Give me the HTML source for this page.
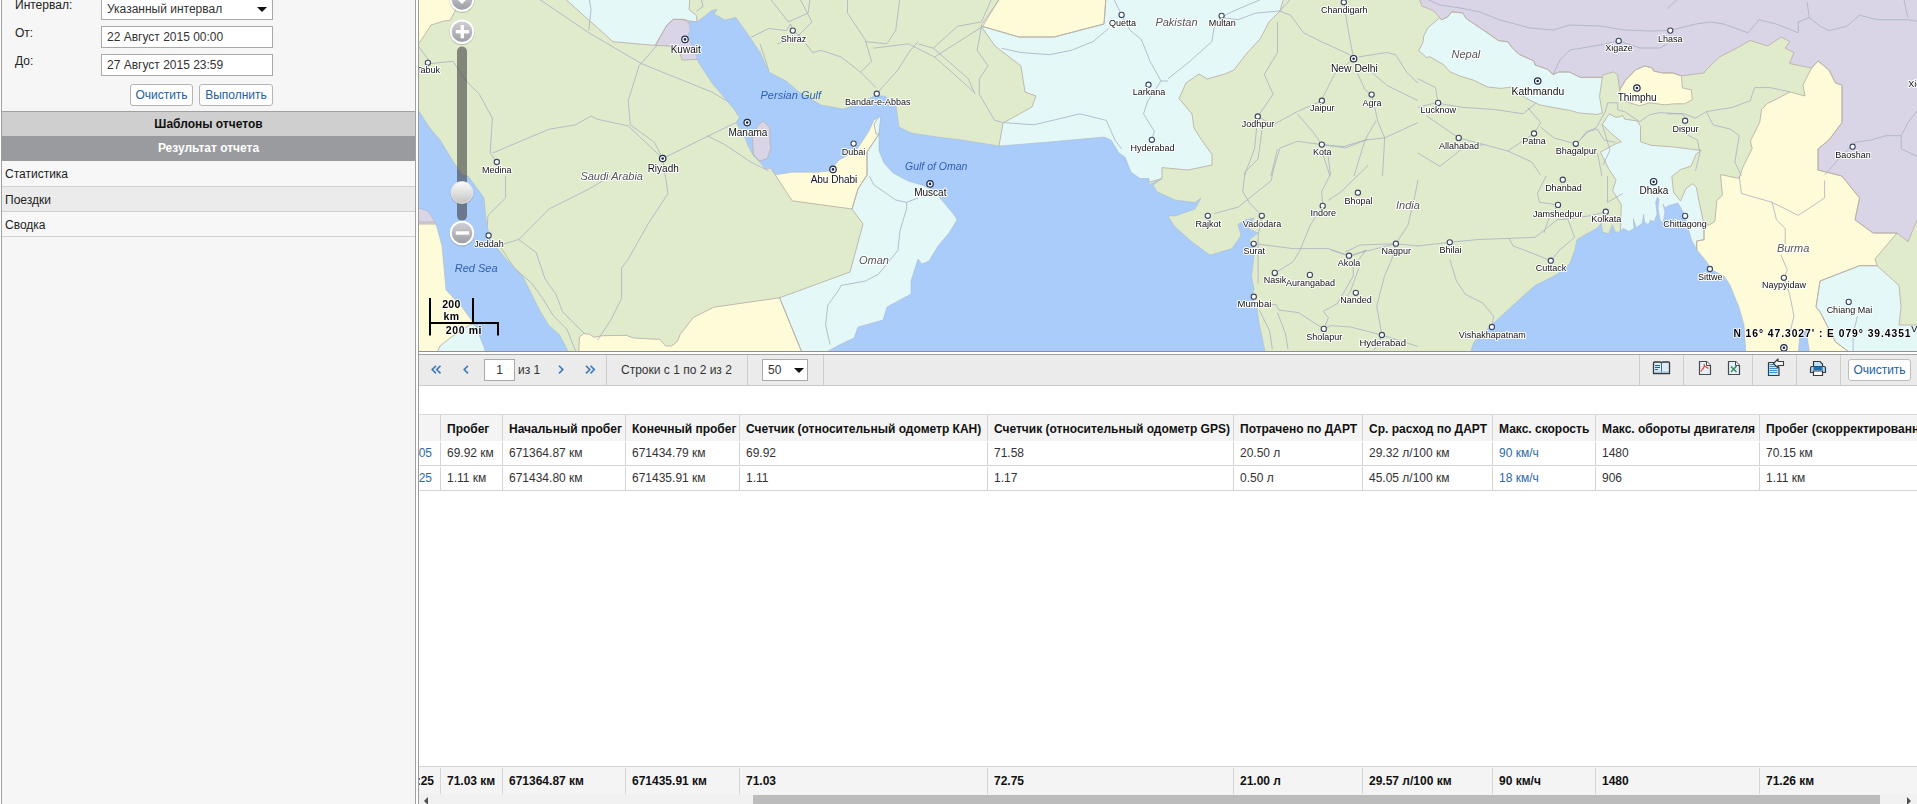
<!DOCTYPE html>
<html><head><meta charset="utf-8">
<style>
*{box-sizing:border-box;margin:0;padding:0}
html,body{width:1917px;height:804px;overflow:hidden;background:#fff;font-family:"Liberation Sans",sans-serif;font-size:12px;color:#222}
.abs{position:absolute}
#left{position:absolute;left:1px;top:0;width:415px;height:804px;background:#f6f6f6;border-left:1px solid #a0a0a6;border-right:1px solid #a0a0a6}
.lbl{position:absolute;left:13px;font-size:12px;color:#222}
.inp{position:absolute;left:101px;width:172px;height:22px;background:#fff;border:1px solid #a9a9a9;font-size:12px;color:#333;padding-left:5px;line-height:20px}
.btn{position:absolute;top:84px;height:22px;background:#fff;border:1px solid #b5b5b5;border-radius:3px;color:#24609c;font-size:12px;line-height:20px;text-align:center}
.hdr{position:absolute;left:0;width:413px;height:25px;text-align:center;font-weight:bold;font-size:12px;line-height:25px}
.item{position:absolute;left:0;width:413px;height:25px;border-bottom:1px solid #d0cfd2;padding-left:3px;line-height:26px;font-size:12px;color:#222}
#mapwrap{position:absolute;left:418px;top:0;width:1499px;height:352px;border-left:1px solid #9c9c9c;border-bottom:1px solid #8f8f8f;overflow:hidden}
#grid{position:absolute;left:418px;top:352px;width:1499px;height:452px;border-left:1px solid #9c9c9c;background:#fff}
#tb{position:absolute;left:0;top:2px;width:1499px;height:32px;background:#ebebeb;border-top:2px solid #a4a4a4;border-bottom:1px solid #cfcfcf}
.sep{position:absolute;top:0;width:1px;height:29px;background:#cfcfcf}
.tbt{position:absolute;top:8px;font-size:12px;color:#333}
table{border-collapse:separate;border-spacing:0}
.row{position:absolute;left:0;height:25px;width:1499px}
.c{position:absolute;top:0;height:25px;line-height:24px;padding-left:6px;white-space:nowrap;overflow:hidden;font-size:12px;color:#333}
.cl{position:absolute;line-height:24px;white-space:nowrap;overflow:hidden;font-size:12px}
.vl{position:absolute;width:1px;background:#d4d4d4}
.tt{font-size:12px;color:#333}
</style></head><body>
<div id="left">
  <div class="lbl" style="top:-2px">Интервал:</div>
  <div class="inp" style="top:-4px;height:24px;line-height:25px;left:99px;width:172px">Указанный интервал<span style="position:absolute;right:5px;top:10px;width:0;height:0;border-left:5px solid transparent;border-right:5px solid transparent;border-top:5px solid #111"></span></div>
  <div class="lbl" style="top:26px">От:</div>
  <div class="inp" style="top:26px;left:99px;width:172px">22 Август 2015 00:00</div>
  <div class="lbl" style="top:54px">До:</div>
  <div class="inp" style="top:54px;left:99px;width:172px">27 Август 2015 23:59</div>
  <div class="btn" style="left:128px;width:63px">Очистить</div>
  <div class="btn" style="left:197px;width:74px">Выполнить</div>
  <div class="hdr" style="top:111px;border-top:1px solid #a0a0a0;background:#d0cfd0;color:#111;height:25px;line-height:25px">Шаблоны отчетов</div>
  <div class="hdr" style="top:136px;background:#9a9b9e;color:#fff">Результат отчета</div>
  <div class="item" style="top:161px;height:26px;line-height:27px;background:#f7f7f7">Статистика</div>
  <div class="item" style="top:187px;background:#ebebeb">Поездки</div>
  <div class="item" style="top:212px;background:#f7f7f7">Сводка</div>
</div>
<div id="mapwrap"><svg class="abs" style="left:0;top:0;will-change:transform" width="1498" height="351" viewBox="419 0 1498 351">
<defs><linearGradient id="gb" x1="0" y1="0" x2="0" y2="1"><stop offset="0" stop-color="#d2d2d6"/><stop offset="1" stop-color="#9b9ca3"/></linearGradient><linearGradient id="gh" x1="0" y1="0" x2="0" y2="1"><stop offset="0" stop-color="#fbfbfb"/><stop offset="1" stop-color="#c4c4c4"/></linearGradient></defs>
<rect x="418" y="0" width="1499" height="351" fill="#e0ebcc"/>
<polygon fill="#fefbd8" points="415,-3 462,-3 455,11 450,20.5 444,21 431,25 420,42 415,44"/>
<polygon fill="#fefbd8" points="415,222 470,222 470,300 500,355 415,355"/>
<polygon fill="#d9d5e6" points="415,207 428,210 437,224 415,224"/>
<polygon fill="#e4f8f8" points="471,324 462,330 450,338 440,346 436,355 500,355 490,330"/>
<polygon fill="#e4f8f8" points="563,-3 613,41.7 655,45.4 667,25 673.5,19.3 684,19.3 689,21 697,22 696.5,15.6 689,9.4 690,-3"/>
<polygon fill="#d9d5e6" points="655.8,45.4 667,25 673.5,19.3 684,19.8 689,23 700,30 705,58 697.5,59.5 682,60 678.8,50 668,45.9"/>
<polygon fill="#fefbd8" points="578.7,355 579.4,337.2 583.8,333.5 589.7,334.3 594,337.2 602.8,335.7 626,335.3 633.5,338 659.8,339.4 665.6,346 671.5,346 677.3,341.6 680.2,334.3 693.4,317.5 713.8,307.2 779.6,297.8 803,355"/>
<polygon fill="#fefbd8" points="765,160 835,155 868,118 882,112 879,134 867,152 867,175 858,189 852,209 792.2,200.8 771,168.5"/>
<polygon fill="#e4f8f8" points="867,152 879,134 900,140 975,215 960,355 803,355 779.6,297.8 850,272 863,224 852,209 858,189 867,175"/>
<polygon fill="#e4f8f8" points="874,124 882,112 880,134 876,134"/>
<polygon fill="#fefbd8" points="1001,-3 1106,-3 1104,24 1054,37 1019,37 981,26"/>
<polygon fill="#e4f8f8" points="1106,-3 1284,-3 1280,11 1269,22 1260,39 1247,53 1234,70 1225,74 1207,79 1199,74 1186,83 1179,98.5 1192,114 1194,128 1201,139 1212,154.5 1212,165 1188,170 1162,167.6 1162,178.5 1150,182 999,162 999,146 1003,123 1032,107 1036,96 1025,92 1021,66 995,46 981,26 1019,37 1054,37 1104,24"/>
<polygon fill="#d9d5e6" points="1418.8,-3 1920,-3 1920,213 1908,241.7 1897,233 1873,233 1855,219.8 1859.6,198 1842,176 1818,170 1818,149 1829,140 1842,122.6 1842,85 1835.6,83 1829,70 1818,61 1811.5,68 1789.6,63.5 1794,52.5 1785,48 1790,41.6 1781,37 1768,46 1750,40.5 1737,48 1719.5,57 1706,70 1704.3,72.9 1681.4,75.9 1672.4,72.9 1662.5,72.9 1653.5,71 1652.5,68 1644.6,66 1635.6,69.9 1625.7,79.9 1619.7,89.9 1617.7,74.9 1613.7,71.9 1602.8,74.9 1602.3,77.4 1580.4,77.4 1569.4,72 1558.5,72 1553,74.7 1547.5,69.2 1535.2,65.1 1533.9,61 1518.8,54.2 1512,47.4 1507.9,41.9 1498.3,40.5 1484.6,30.9 1468.2,20 1466.6,18.9 1462.6,12.9 1451.6,11.9 1447.7,16.9 1441.7,19.9 1433.7,10.9 1421.8,6"/>
<polygon fill="#e4f8f8" points="1439.7,17.9 1441.7,19.9 1447.7,16.9 1451.6,11.9 1462.6,12.9 1466.6,18.9 1468.2,20 1484.6,30.9 1498.3,40.5 1507.9,41.9 1512,47.4 1518.8,54.2 1533.9,61 1535.2,65.1 1547.5,69.2 1553,74.7 1558.5,72 1569.4,72 1580.4,77.4 1602.3,77.4 1599.5,96.6 1602.3,113 1596.8,114.4 1579,113 1569.4,110.3 1553,107.5 1539.3,104.8 1525.7,98 1512,87 1501,88.4 1487.4,87 1473.7,80.2 1460,76.1 1449.7,71.6 1443.7,64.7 1429.8,56.7 1426.8,57.7 1418.8,50.7 1422.8,42.8 1423.8,35.8 1427.8,27.9"/>
<polygon fill="#fefbd8" points="1619.7,89.9 1625.7,79.9 1635.6,69.9 1644.6,66 1652.5,68 1653.5,71 1662.5,72.9 1672.4,72.9 1681.4,75.9 1682.4,87.9 1691.3,89.9 1692.3,99.8 1684.4,103.8 1674.4,103.8 1664.5,104.8 1649.6,102.8 1639.6,105.8 1629.7,102.8 1621.7,99.8"/>
<polygon fill="#e4f8f8" points="1602.2,124.4 1609.2,113.9 1616.1,117.4 1623,115.7 1624.8,119.2 1637,120.9 1640.5,126.1 1640.5,141.8 1651,145.3 1673.6,147 1701.4,150.5 1696.2,154 1691,166.2 1680.5,169.6 1671.8,176.6 1673.6,192.3 1680.5,201 1685.8,188.8 1692.7,183.6 1696.2,187 1699.7,204.5 1704,224.8 1704,239.7 1696.7,241 1696.7,260 1619.6,260 1621.3,204.5 1612.6,190.5 1616.1,180.1 1609.2,169.6 1600.4,152.2 1616.1,143.5 1621.3,141.8 1610.9,133.1"/>
<polygon fill="#fefbd8" points="1803,85 1811.5,68 1818,61 1829,70 1835.6,83 1842,85 1842,122.6 1829,140 1818,149 1818,170 1842,176 1859.6,198 1855,219.8 1873,233 1897,233 1875,259 1877,265.7 1859.6,265.7 1820,281 1816,307 1820,311.7 1835.6,342 1853,355 1740,355 1690,262 1696.7,250 1696.7,241 1704,239.7 1704,224.8 1709.3,225 1714.9,221.3 1716.8,200.7 1722.4,195.1 1720.5,174.6 1739.2,178.4 1742.9,167.2 1752.2,148.5 1750.4,141 1759.7,122.4 1761.6,109.3 1767,103.7 1774.6,100 1790,92 1805,96"/>
<polygon fill="#e4f8f8" points="1820,281 1859.6,265.7 1877,265.7 1899,285.5 1901,307 1899,325 1920,325 1920,355 1853,355 1835.6,342 1820,311.7 1816,307"/>
<g fill="none" stroke="#a8b0c4" stroke-width="0.8" stroke-linejoin="round">
<polyline points="1168,78.8 1189.9,61.3 1211.8,41.6 1214,28.5 1220.5,17.5 1233.7,11 1266.5,-3"/>
<polyline points="1220.5,17.5 1238,19.7 1255.6,13.1 1279.6,11"/>
<polyline points="992.4,-3 981.5,21.9 957.4,26.3 933.3,48.2 918,43.8"/>
<polyline points="981.5,26.3 977.1,50.4 988,65.7 979.3,78.8 979.3,94.1 994.6,120.4 1003.4,122.6"/>
<polyline points="933.3,48.2 968.4,78.8 974.9,94.1"/>
<polyline points="1001.2,48.2 1020.9,52.5 1049.3,54.7 1071.2,50.4 1093.1,41.6 1108.5,28.5"/>
<polyline points="1112.8,-3 1121.6,14.9 1130.4,30.6 1141.3,39.4 1150,61.3 1161,81 1168,81"/>
<polyline points="1003.4,122.6 1034,124.8 1080,113.8 1106.3,120.4 1115,140.1 1121.6,148.9"/>
<polyline points="1161,81 1147.9,100.7 1143.5,113.8 1154.4,131.3 1151.8,139.7"/>
<polyline points="1292.8,-3 1279.6,11"/>
<polyline points="1279.6,11 1290.6,15.3 1303.7,32.8 1321.2,41.6 1349.7,54.7 1353.6,58.7"/>
<polyline points="1277.5,21.9 1277.5,52.5 1264.3,74.4 1273.1,94.1 1257.8,116.5 1254.5,148.9 1244.6,175.1"/>
<polyline points="1353.6,58.7 1334.4,74.4 1323.4,96.3 1321.9,100.7 1297.2,111.6 1273.1,124.8 1257.8,116.5"/>
<polyline points="1297.2,113.8 1312.5,131.3 1321.9,144.5 1343.1,146.7 1365,140.1 1384.7,137.9 1418,122.6"/>
<polyline points="1343.1,-3 1347.5,26.3 1353.6,58.7"/>
<polyline points="1358.5,56.9 1386.9,52.5 1395.7,54.7 1406.6,72.2 1418,83.2"/>
<polyline points="1354,65.7 1365,89.8 1371.6,94.6 1378.2,122.6 1384.7,137.9 1382.5,176"/>
<polyline points="1371.6,72.2 1386.9,85.4 1418,100.7"/>
<polyline points="1376,120.4 1365,140.1 1354,176"/>
<polyline points="1321.2,148.9 1330,176"/>
<polyline points="1277.5,148.9 1270.9,176"/>
<polyline points="1418,78.8 1435.5,87.6 1438.1,102.9"/>
<polyline points="1418,107.3 1435.5,102.9 1461.8,107.3 1494.6,109.5 1523.1,113.8 1536.2,102.9"/>
<polyline points="1426.8,116 1458.7,137.9 1483.7,144.5 1507.8,151 1534,133.5 1540.6,122.6 1527.5,107.3"/>
<polyline points="1507.8,151 1531.8,162 1540.6,175.1"/>
<polyline points="1540.6,127 1553.7,137.9 1575.8,143.8 1588.8,131.3 1597.5,129.2 1604.1,140.1 1615,142.3"/>
<polyline points="1597.5,153.2 1601.9,176"/>
<polyline points="1418,153.2 1439.9,166.4 1461.8,148.9 1483.7,144.5"/>
<polyline points="1417,246 1449.8,242.3 1478.3,239.5 1508.9,238.4 1535.2,237.3 1557.1,219.8 1570.2,218.7 1592.1,215.4 1605.7,211.7"/>
<polyline points="1508.9,238.4 1513.3,246 1530.8,252.6 1550.8,260.7 1559.3,250.4 1574.6,237.3 1568,219.8"/>
<polyline points="1449.8,259.2 1456.4,281.1 1465.2,294.2 1482.7,303 1493.6,316.1 1491.9,327"/>
<polyline points="1546.2,176 1537.4,193.5 1539.6,202.3 1558,204.9 1548.3,219.8 1544,232.9"/>
<polyline points="1607.5,176 1607.5,202.3 1622.8,193.5"/>
<polyline points="1262.5,126 1258.1,158.8 1245,172 1242.8,191.7 1249.3,202.6 1261.8,215.8 1258.1,235.5 1258.1,257.3 1258.1,283.6"/>
<polyline points="1280,147.9 1297.5,141.3 1321.6,144.6 1345.7,147.9 1368,139.1"/>
<polyline points="1280,147.9 1273.4,169.8 1271.2,180.7 1249.3,198.2 1238.4,207 1214.3,213.6"/>
<polyline points="1328.2,156.6 1330.4,174.2 1321.6,191.7 1322.7,205.9 1310.6,224.5 1299.7,250.8 1293.1,261.7 1275.6,272.7"/>
<polyline points="1368,165.4 1341.3,191.7 1328.2,200.4"/>
<polyline points="1258.1,244.2 1293.1,248.6 1328.2,248.6 1349,255.6 1368,250.8 1395.9,243.7 1418,246"/>
<polyline points="1358.8,268.3 1350,292.4 1341.3,302"/>
<polyline points="1256.7,302.2 1276.2,304.8 1278.8,310 1298.4,312.6 1323.8,328.9 1331,325.6 1350.6,327 1381.9,335 1418,346.5"/>
<polyline points="1259.3,310 1269.7,330.9 1272.3,349.1"/>
<polyline points="1277.5,312.6 1285.4,333.5 1288,349.1"/>
<polyline points="1323.8,328.9 1328.4,317.8 1323.2,311.3 1337.5,303.5 1342.8,294.3 1353.2,276.1 1353.2,267 1366.2,250"/>
<polyline points="1381.9,335 1376.7,306.1 1384.5,276.1 1392.3,257.8 1395.9,243.7 1408,225 1414,200 1418,180"/>
<polyline points="1381.9,336 1374,350.4"/>
<polyline points="1331,250 1350.6,256.5 1366.2,250"/>
<polyline points="1395.9,243.7 1360,245 1345,252"/>
<polyline points="700.8,-3 703,6.6 696.5,11"/>
<polyline points="768.7,-3 788.4,21.9 808.1,13.1 810.3,-3"/>
<polyline points="751.2,37.2 768.7,28.5 786.2,30.6 790.6,24.1 792.8,30.6"/>
<polyline points="760,43.8 768.7,70"/>
<polyline points="790.6,30.6 799.3,35 812.5,52.5 821.2,50.4 841,56.9 860.6,72.2 876,87.6"/>
<polyline points="847.5,-3 847.5,13.1 865,39.4 871.6,61.3 860.6,72.2"/>
<polyline points="865,41.6 886.9,43.8 895.7,30.6 900,-3"/>
<polyline points="918,41.6 908.8,52.5 897.9,70 878.2,92"/>
<polyline points="536.2,-3 588.8,32.8 641.3,63.5 668,74.4 711.8,92 733.7,105"/>
<polyline points="588.8,-3 591,8.8 588.8,30.6"/>
<polyline points="656.6,46 639.1,65.7 628.2,100.7 630.3,124.8 654.4,142.3 662.7,158.5"/>
<polyline points="492.4,153.2 523.1,140.1 549.3,129.2 575.6,124.8 591,116 597.5,119.3 628.2,125.9 662.7,158.5"/>
<polyline points="415,41.6 431.1,63.5 453,61.3 466.2,81 479.3,94.1 492.4,118.2 490.2,153.2 496.8,162"/>
<polyline points="662.7,158.5 700,140 735,123 747.2,122.6"/>
<polyline points="505.6,176 505.6,197.9 488,215.4 485.9,239.5"/>
<polyline points="610.6,176 588.8,189.1 549.3,208.8 518.7,239.5 496.8,246"/>
<polyline points="518.7,239.5 536.2,252.6 545,278.9 555.9,294.2 562.5,311.7 571.2,320.5 584.4,333.6"/>
<polyline points="668,193.5 647.9,224.2 628.2,259.2 621.6,268 621.6,298.6 610.6,320.5 597.5,340.2"/>
<polyline points="501.2,248.2 514.3,268 531.8,283.3 542.8,298.6 553.7,316.1 566.9,329.2 575.6,351"/>
<polyline points="662.7,158.5 668,193.5"/>
<polyline points="707,135.7 724.5,144.5 750.8,162 768.3,170.7"/>
<polyline points="799,-3 812,22 794.5,39.4 777,43.8"/>
<polyline points="873.3,48.2 908.4,43.8 934.6,57 974,92"/>
<polyline points="934.6,57 982.8,26.3 1000.3,-3"/>
<polyline points="869.4,176 873.8,184.8 895.7,200 906.6,202.3 906.6,208.8 900,230.7 897.9,250.4 878.2,274.5 865,281.1 841,285.5 838.8,289.8 827.8,305.2 825.6,324.9 830,344.6"/>
<polyline points="906.6,202.3 918,198"/>
<polyline points="1667,8.8 1680,-3"/>
<polyline points="1667,30.6 1678,28.5 1695.5,24.1 1710.8,21.9 1724,24.1 1748,32.8 1759,19.7 1776.5,24.1 1798.3,32.8 1798.3,21.9 1809.3,17.5 1807.1,2.2"/>
<polyline points="1809.3,17.5 1820.2,26.3 1829,30.6 1846.5,26.3 1859.6,15.3 1877.2,19.7 1907.8,19.7 1920,21.9"/>
<polyline points="1903.4,-3 1907.8,17.5"/>
<polyline points="1920,107.3 1907.8,122.6 1901.2,135.7 1885.9,135.7 1870.6,140.1 1855.3,142.3 1840,157.6 1824.6,175.1"/>
<polyline points="1901.2,135.7 1901.2,148.9 1920,157.6"/>
<polyline points="1422,-3 1440,5 1460,8 1480,12 1500,20 1530,28 1553,30 1570,25 1600,26 1625,30 1650,31 1667,30.6"/>
<polyline points="1553,74.7 1560,60 1570,50 1600,45 1618.7,40.9 1640,48 1660,48 1667,44"/>
<polyline points="1607.8,102.8 1617.7,102.8 1617.7,109.8 1624.7,111.7 1639.6,121.7 1649.6,114.7 1659.5,112.7 1681.4,113.7 1685.4,116.7"/>
<polyline points="1607.8,102.8 1605,112 1596,128 1586,132 1580,140"/>
<polyline points="1667,113.8 1684.5,113.8 1695.5,118.2 1706.4,111.6 1732.7,107.3 1750.2,100.7 1754.6,87.6 1769.9,87.6 1780.8,89.8 1789.6,91.9"/>
<polyline points="1706.4,111.6 1713,124.8 1730.5,129.2 1739.2,135.7 1737,148.9 1734.9,162 1741.4,176"/>
<polyline points="1684.5,133.5 1697.6,140.1 1699.8,153.2 1695.5,170.8"/>
<polyline points="1602,124 1610,150 1603,165"/>
<polyline points="1739.2,176 1741.4,193.5 1772.1,202.3 1776.5,219.8 1785.2,228.5 1785.2,243.9"/>
<polyline points="1772.1,202.3 1798.3,215.4 1824.6,197.9 1824.6,180.4"/>
<polyline points="1780.8,254.8 1787.4,270.1 1783.9,277.8 1789.6,294.2 1794,316.1 1789.6,333.6"/>
<polyline points="1857.5,316.1 1853.1,333.6 1853.1,355"/>
</g>
<g fill="none" stroke="#bbb2aa" stroke-width="0.9" stroke-linejoin="round">
<polygon points="415,-3 462,-3 455,11 450,20.5 444,21 431,25 420,42 415,44"/>
<polygon points="415,222 470,222 470,300 500,355 415,355"/>
<polygon points="415,207 428,210 437,224 415,224"/>
<polygon points="471,324 462,330 450,338 440,346 436,355 500,355 490,330"/>
<polygon points="563,-3 613,41.7 655,45.4 667,25 673.5,19.3 684,19.3 689,21 697,22 696.5,15.6 689,9.4 690,-3"/>
<polygon points="655.8,45.4 667,25 673.5,19.3 684,19.8 689,23 700,30 705,58 697.5,59.5 682,60 678.8,50 668,45.9"/>
<polygon points="578.7,355 579.4,337.2 583.8,333.5 589.7,334.3 594,337.2 602.8,335.7 626,335.3 633.5,338 659.8,339.4 665.6,346 671.5,346 677.3,341.6 680.2,334.3 693.4,317.5 713.8,307.2 779.6,297.8 803,355"/>
<polygon points="765,160 835,155 868,118 882,112 879,134 867,152 867,175 858,189 852,209 792.2,200.8 771,168.5"/>
<polygon points="867,152 879,134 900,140 975,215 960,355 803,355 779.6,297.8 850,272 863,224 852,209 858,189 867,175"/>
<polygon points="874,124 882,112 880,134 876,134"/>
<polygon points="1001,-3 1106,-3 1104,24 1054,37 1019,37 981,26"/>
<polygon points="1106,-3 1284,-3 1280,11 1269,22 1260,39 1247,53 1234,70 1225,74 1207,79 1199,74 1186,83 1179,98.5 1192,114 1194,128 1201,139 1212,154.5 1212,165 1188,170 1162,167.6 1162,178.5 1150,182 999,162 999,146 1003,123 1032,107 1036,96 1025,92 1021,66 995,46 981,26 1019,37 1054,37 1104,24"/>
<polygon points="1418.8,-3 1920,-3 1920,213 1908,241.7 1897,233 1873,233 1855,219.8 1859.6,198 1842,176 1818,170 1818,149 1829,140 1842,122.6 1842,85 1835.6,83 1829,70 1818,61 1811.5,68 1789.6,63.5 1794,52.5 1785,48 1790,41.6 1781,37 1768,46 1750,40.5 1737,48 1719.5,57 1706,70 1704.3,72.9 1681.4,75.9 1672.4,72.9 1662.5,72.9 1653.5,71 1652.5,68 1644.6,66 1635.6,69.9 1625.7,79.9 1619.7,89.9 1617.7,74.9 1613.7,71.9 1602.8,74.9 1602.3,77.4 1580.4,77.4 1569.4,72 1558.5,72 1553,74.7 1547.5,69.2 1535.2,65.1 1533.9,61 1518.8,54.2 1512,47.4 1507.9,41.9 1498.3,40.5 1484.6,30.9 1468.2,20 1466.6,18.9 1462.6,12.9 1451.6,11.9 1447.7,16.9 1441.7,19.9 1433.7,10.9 1421.8,6"/>
<polygon points="1439.7,17.9 1441.7,19.9 1447.7,16.9 1451.6,11.9 1462.6,12.9 1466.6,18.9 1468.2,20 1484.6,30.9 1498.3,40.5 1507.9,41.9 1512,47.4 1518.8,54.2 1533.9,61 1535.2,65.1 1547.5,69.2 1553,74.7 1558.5,72 1569.4,72 1580.4,77.4 1602.3,77.4 1599.5,96.6 1602.3,113 1596.8,114.4 1579,113 1569.4,110.3 1553,107.5 1539.3,104.8 1525.7,98 1512,87 1501,88.4 1487.4,87 1473.7,80.2 1460,76.1 1449.7,71.6 1443.7,64.7 1429.8,56.7 1426.8,57.7 1418.8,50.7 1422.8,42.8 1423.8,35.8 1427.8,27.9"/>
<polygon points="1619.7,89.9 1625.7,79.9 1635.6,69.9 1644.6,66 1652.5,68 1653.5,71 1662.5,72.9 1672.4,72.9 1681.4,75.9 1682.4,87.9 1691.3,89.9 1692.3,99.8 1684.4,103.8 1674.4,103.8 1664.5,104.8 1649.6,102.8 1639.6,105.8 1629.7,102.8 1621.7,99.8"/>
<polygon points="1602.2,124.4 1609.2,113.9 1616.1,117.4 1623,115.7 1624.8,119.2 1637,120.9 1640.5,126.1 1640.5,141.8 1651,145.3 1673.6,147 1701.4,150.5 1696.2,154 1691,166.2 1680.5,169.6 1671.8,176.6 1673.6,192.3 1680.5,201 1685.8,188.8 1692.7,183.6 1696.2,187 1699.7,204.5 1704,224.8 1704,239.7 1696.7,241 1696.7,260 1619.6,260 1621.3,204.5 1612.6,190.5 1616.1,180.1 1609.2,169.6 1600.4,152.2 1616.1,143.5 1621.3,141.8 1610.9,133.1"/>
<polygon points="1803,85 1811.5,68 1818,61 1829,70 1835.6,83 1842,85 1842,122.6 1829,140 1818,149 1818,170 1842,176 1859.6,198 1855,219.8 1873,233 1897,233 1875,259 1877,265.7 1859.6,265.7 1820,281 1816,307 1820,311.7 1835.6,342 1853,355 1740,355 1690,262 1696.7,250 1696.7,241 1704,239.7 1704,224.8 1709.3,225 1714.9,221.3 1716.8,200.7 1722.4,195.1 1720.5,174.6 1739.2,178.4 1742.9,167.2 1752.2,148.5 1750.4,141 1759.7,122.4 1761.6,109.3 1767,103.7 1774.6,100 1790,92 1805,96"/>
<polygon points="1820,281 1859.6,265.7 1877,265.7 1899,285.5 1901,307 1899,325 1920,325 1920,355 1853,355 1835.6,342 1820,311.7 1816,307"/>
</g>
<polygon fill="#aaccfa" stroke="#a6b4c4" stroke-width="0.5" points="415,105 429,127 440,140 451,158 462,175 468,176 484,198 486,220 490,239 506,259 523,277 540,311 548.8,325.5 559,334.3 567.8,350.6 569,355 486,355 484,347 475,325 462,307 446,290 444,268 442,246 436,224 428,211 415,207"/>
<polygon fill="#aaccfa" stroke="#a6b4c4" stroke-width="0.5" points="697,22 712,10.4 717,9.4 714,14 725,20 736,17.5 751,39 760,52.5 769,72 786,81 799,92 821,105 843,109 858,105 874,96 885,96 896,106 899,127 911,133 937,137 962,140 999,146 1049,142 1104,137 1111,140 1119,153 1125,157 1131,172 1140,178.5 1149,178.5 1149,185 1162,178.5 1153,185 1157,191.7 1175,200 1195,202.6 1201,198 1195,209 1175,216 1168,216 1175,227 1192,242 1210,255 1232,248.6 1241,235.5 1238,224.5 1245,220 1254,218 1249,229 1258,233 1249,240 1254,248.6 1254,256.5 1251.5,276 1254,289 1251.5,297 1256.7,307 1259,323 1264.5,349 1265,355 821,355 839,345 854,338 858,327 883,320 887,307 911,294 911,281 918,259 922,264 929,261 938,246 949,233 957,220 955,216 945,204 940,198 934,190 922,185 908,181 893,173 884,163 879,151 879,134 880.7,116.4 874,120 869,131 856,151 839.4,159.7 829.5,171 817,172.2 792.2,172.2 776,174.7 771,168.5 764.8,168.5 759.9,162.2 753.6,156 748.7,147.3 744.9,137.4 736.2,122.4 739.3,117.5 734,109 712,83 698.6,62.6 696.5,56.3 690.2,41.7 688.1,34.4 690.2,31.3 689.2,20.9"/>
<polygon fill="#aaccfa" stroke="#a6b4c4" stroke-width="0.5" points="1469.5,355 1474,342 1494,322.7 1515.5,303 1535,285.5 1557,274.5 1570,263.6 1574.6,250.4 1577,239.5 1588,233 1590,232.2 1597.5,227.8 1601.2,223.3 1602.7,232.2 1608.7,233.7 1612.4,224.8 1615.4,232.2 1618.4,232.2 1623.6,228.5 1628.8,231.5 1634,228.5 1633.3,218.8 1636.3,227.8 1642.2,223.3 1643.7,214.3 1644.5,221.8 1648.2,224.8 1650.4,220.3 1654.2,221.8 1657,214 1655.7,202.4 1657.2,197.2 1659,199 1658,208 1660,220 1663,223 1665,212 1663,204 1665,208 1669.1,205.4 1678,203.1 1681,208.4 1684,213.6 1687,224.8 1689.3,232.2 1691.5,240 1697,250 1706,261 1712,270 1724,276 1730,285 1736,300 1739,307 1744,325 1746,355"/>
<polygon fill="#aaccfa" stroke="#a6b4c4" stroke-width="0.5" points="1798,355 1800,335 1806,330 1810,355"/>
<polygon fill="#d9d5e6" stroke="#bbb2aa" stroke-width="0.8" points="763,121.2 769.8,127.4 769.8,142.3 771,147.3 767.3,158.5 759.8,161 753.6,154.8 752.4,139.8 757.4,126.2"/>
<g>
<circle cx="427.9" cy="62.8" r="2.6" fill="#fff" stroke="#3a4662" stroke-width="1.1"/>
<circle cx="685" cy="39.4" r="3.2" fill="#fff" stroke="#1d2a4a" stroke-width="1.2"/><circle cx="685" cy="39.4" r="1.3" fill="#1d2a4a"/>
<circle cx="792.8" cy="30.6" r="2.6" fill="#fff" stroke="#3a4662" stroke-width="1.1"/>
<circle cx="876.8" cy="93.7" r="2.6" fill="#fff" stroke="#3a4662" stroke-width="1.1"/>
<circle cx="747.2" cy="122.6" r="3.2" fill="#fff" stroke="#1d2a4a" stroke-width="1.2"/><circle cx="747.2" cy="122.6" r="1.3" fill="#1d2a4a"/>
<circle cx="662.7" cy="158.5" r="3.2" fill="#fff" stroke="#1d2a4a" stroke-width="1.2"/><circle cx="662.7" cy="158.5" r="1.3" fill="#1d2a4a"/>
<circle cx="496.8" cy="162" r="2.6" fill="#fff" stroke="#3a4662" stroke-width="1.1"/>
<circle cx="853.6" cy="143.6" r="2.6" fill="#fff" stroke="#3a4662" stroke-width="1.1"/>
<circle cx="833" cy="169.4" r="3.2" fill="#fff" stroke="#1d2a4a" stroke-width="1.2"/><circle cx="833" cy="169.4" r="1.3" fill="#1d2a4a"/>
<circle cx="488.6" cy="235.5" r="2.6" fill="#fff" stroke="#3a4662" stroke-width="1.1"/>
<circle cx="930" cy="183.9" r="3.2" fill="#fff" stroke="#1d2a4a" stroke-width="1.2"/><circle cx="930" cy="183.9" r="1.3" fill="#1d2a4a"/>
<circle cx="1121.6" cy="14.9" r="2.6" fill="#fff" stroke="#3a4662" stroke-width="1.1"/>
<circle cx="1221.6" cy="15.8" r="2.6" fill="#fff" stroke="#3a4662" stroke-width="1.1"/>
<circle cx="1148.5" cy="84.7" r="2.6" fill="#fff" stroke="#3a4662" stroke-width="1.1"/>
<circle cx="1151.9" cy="139.8" r="2.6" fill="#fff" stroke="#3a4662" stroke-width="1.1"/>
<circle cx="1343.8" cy="2.2" r="2.6" fill="#fff" stroke="#3a4662" stroke-width="1.1"/>
<circle cx="1353.6" cy="58.7" r="3.2" fill="#fff" stroke="#1d2a4a" stroke-width="1.2"/><circle cx="1353.6" cy="58.7" r="1.3" fill="#1d2a4a"/>
<circle cx="1321.9" cy="100.7" r="2.6" fill="#fff" stroke="#3a4662" stroke-width="1.1"/>
<circle cx="1371.6" cy="94.6" r="2.6" fill="#fff" stroke="#3a4662" stroke-width="1.1"/>
<circle cx="1257.8" cy="116.5" r="2.6" fill="#fff" stroke="#3a4662" stroke-width="1.1"/>
<circle cx="1321.8" cy="144.6" r="2.6" fill="#fff" stroke="#3a4662" stroke-width="1.1"/>
<circle cx="1207.8" cy="215.8" r="2.6" fill="#fff" stroke="#3a4662" stroke-width="1.1"/>
<circle cx="1261.8" cy="215.8" r="2.6" fill="#fff" stroke="#3a4662" stroke-width="1.1"/>
<circle cx="1253.7" cy="243.8" r="2.6" fill="#fff" stroke="#3a4662" stroke-width="1.1"/>
<circle cx="1274.8" cy="272.9" r="2.6" fill="#fff" stroke="#3a4662" stroke-width="1.1"/>
<circle cx="1309.9" cy="274.9" r="2.6" fill="#fff" stroke="#3a4662" stroke-width="1.1"/>
<circle cx="1322.7" cy="205.9" r="2.6" fill="#fff" stroke="#3a4662" stroke-width="1.1"/>
<circle cx="1357.9" cy="192.7" r="2.6" fill="#fff" stroke="#3a4662" stroke-width="1.1"/>
<circle cx="1395.9" cy="243.7" r="2.6" fill="#fff" stroke="#3a4662" stroke-width="1.1"/>
<circle cx="1349" cy="255.7" r="2.6" fill="#fff" stroke="#3a4662" stroke-width="1.1"/>
<circle cx="1253.8" cy="296.7" r="2.6" fill="#fff" stroke="#3a4662" stroke-width="1.1"/>
<circle cx="1355.8" cy="292.8" r="2.6" fill="#fff" stroke="#3a4662" stroke-width="1.1"/>
<circle cx="1323.8" cy="328.9" r="2.6" fill="#fff" stroke="#3a4662" stroke-width="1.1"/>
<circle cx="1381.9" cy="335" r="2.6" fill="#fff" stroke="#3a4662" stroke-width="1.1"/>
<circle cx="1618.7" cy="40.9" r="2.6" fill="#fff" stroke="#3a4662" stroke-width="1.1"/>
<circle cx="1670.3" cy="30.6" r="2.6" fill="#fff" stroke="#3a4662" stroke-width="1.1"/>
<circle cx="1537.7" cy="81" r="3.2" fill="#fff" stroke="#1d2a4a" stroke-width="1.2"/><circle cx="1537.7" cy="81" r="1.3" fill="#1d2a4a"/>
<circle cx="1636.9" cy="88" r="3.2" fill="#fff" stroke="#1d2a4a" stroke-width="1.2"/><circle cx="1636.9" cy="88" r="1.3" fill="#1d2a4a"/>
<circle cx="1438.1" cy="102.9" r="2.6" fill="#fff" stroke="#3a4662" stroke-width="1.1"/>
<circle cx="1458.7" cy="137.9" r="2.6" fill="#fff" stroke="#3a4662" stroke-width="1.1"/>
<circle cx="1534" cy="133.5" r="2.6" fill="#fff" stroke="#3a4662" stroke-width="1.1"/>
<circle cx="1575.8" cy="143.8" r="2.6" fill="#fff" stroke="#3a4662" stroke-width="1.1"/>
<circle cx="1685.1" cy="120.7" r="2.6" fill="#fff" stroke="#3a4662" stroke-width="1.1"/>
<circle cx="1653.6" cy="181.7" r="3.2" fill="#fff" stroke="#1d2a4a" stroke-width="1.2"/><circle cx="1653.6" cy="181.7" r="1.3" fill="#1d2a4a"/>
<circle cx="1605.8" cy="211.7" r="2.6" fill="#fff" stroke="#3a4662" stroke-width="1.1"/>
<circle cx="1685.1" cy="215.9" r="2.6" fill="#fff" stroke="#3a4662" stroke-width="1.1"/>
<circle cx="1562.8" cy="179.7" r="2.6" fill="#fff" stroke="#3a4662" stroke-width="1.1"/>
<circle cx="1558" cy="204.9" r="2.6" fill="#fff" stroke="#3a4662" stroke-width="1.1"/>
<circle cx="1449.8" cy="242.3" r="2.6" fill="#fff" stroke="#3a4662" stroke-width="1.1"/>
<circle cx="1550.8" cy="260.7" r="2.6" fill="#fff" stroke="#3a4662" stroke-width="1.1"/>
<circle cx="1491.9" cy="327" r="2.6" fill="#fff" stroke="#3a4662" stroke-width="1.1"/>
<circle cx="1852.6" cy="146.7" r="2.6" fill="#fff" stroke="#3a4662" stroke-width="1.1"/>
<circle cx="1709.9" cy="269" r="2.6" fill="#fff" stroke="#3a4662" stroke-width="1.1"/>
<circle cx="1783.9" cy="277.8" r="2.6" fill="#fff" stroke="#3a4662" stroke-width="1.1"/>
<circle cx="1848.7" cy="301.9" r="2.6" fill="#fff" stroke="#3a4662" stroke-width="1.1"/>
<circle cx="1783.9" cy="347.8" r="3.2" fill="#fff" stroke="#1d2a4a" stroke-width="1.2"/><circle cx="1783.9" cy="347.8" r="1.3" fill="#1d2a4a"/>
</g>
<g font-family="Liberation Sans, sans-serif" text-anchor="middle" stroke="#fff" stroke-width="2" stroke-linejoin="round" paint-order="stroke">
<text x="428" y="73.3" font-size="9" fill="#111">Tabuk</text>
<text x="685.7" y="52.5" font-size="10" fill="#111">Kuwait</text>
<text x="793.4" y="41.6" font-size="9" fill="#111">Shiraz</text>
<text x="790.8" y="98.5" font-size="11" font-style="italic" fill="#2f5fb0" stroke="none">Persian Gulf</text>
<text x="877.7" y="105" font-size="9" fill="#111">Bandar-e-Abbas</text>
<text x="747.9" y="135.7" font-size="10" fill="#111">Manama</text>
<text x="663.2" y="172" font-size="10" fill="#111">Riyadh</text>
<text x="496.8" y="172.5" font-size="9" fill="#111">Medina</text>
<text x="611.7" y="179.5" font-size="11" font-style="italic" fill="#555">Saudi Arabia</text>
<text x="853.6" y="154.6" font-size="9" fill="#111">Dubai</text>
<text x="834" y="183" font-size="10" fill="#111">Abu Dhabi</text>
<text x="489" y="247.4" font-size="9" fill="#111">Jeddah</text>
<text x="476.2" y="271.5" font-size="11" font-style="italic" fill="#2f5fb0" stroke="none">Red Sea</text>
<text x="874" y="264" font-size="11" font-style="italic" fill="#555">Oman</text>
<text x="936.2" y="170.1" font-size="10.5" font-style="italic" fill="#2f5fb0" stroke="none">Gulf of Oman</text>
<text x="930.3" y="196.3" font-size="10" fill="#111">Muscat</text>
<text x="1122.5" y="25.8" font-size="9" fill="#111">Quetta</text>
<text x="1176.5" y="26.3" font-size="11" font-style="italic" fill="#555">Pakistan</text>
<text x="1222.2" y="25.8" font-size="9" fill="#111">Multan</text>
<text x="1149" y="95.2" font-size="9" fill="#111">Larkana</text>
<text x="1152.6" y="150.5" font-size="9" fill="#111">Hyderabad</text>
<text x="1344.2" y="12.5" font-size="9" fill="#111">Chandigarh</text>
<text x="1354.4" y="71.8" font-size="10.3" fill="#111">New Delhi</text>
<text x="1322.3" y="110.5" font-size="9" fill="#111">Jaipur</text>
<text x="1372.1" y="105.5" font-size="9" fill="#111">Agra</text>
<text x="1258.1" y="127.4" font-size="9" fill="#111">Jodhpur</text>
<text x="1322.3" y="155" font-size="9" fill="#111">Kota</text>
<text x="1208.3" y="227.1" font-size="9" fill="#111">Rajkot</text>
<text x="1262" y="227.1" font-size="9" fill="#111">Vadodara</text>
<text x="1254.3" y="254.1" font-size="9" fill="#111">Surat</text>
<text x="1275" y="283" font-size="9" fill="#111">Nasik</text>
<text x="1310.4" y="285.5" font-size="9" fill="#111">Aurangabad</text>
<text x="1323.2" y="216.2" font-size="9" fill="#111">Indore</text>
<text x="1358.4" y="203.7" font-size="9" fill="#111">Bhopal</text>
<text x="1407.9" y="208.7" font-size="11" font-style="italic" fill="#555">India</text>
<text x="1396.3" y="254.4" font-size="9" fill="#111">Nagpur</text>
<text x="1349" y="266" font-size="9" fill="#111">Akola</text>
<text x="1254.4" y="307.4" font-size="9.5" fill="#111">Mumbai</text>
<text x="1356.1" y="303.2" font-size="9" fill="#111">Nanded</text>
<text x="1324.2" y="339.7" font-size="9" fill="#111">Sholapur</text>
<text x="1382.7" y="345.5" font-size="9.5" fill="#111">Hyderabad</text>
<text x="1465.9" y="58" font-size="11" font-style="italic" fill="#555">Nepal</text>
<text x="1619" y="51.4" font-size="9" fill="#111">Xigaze</text>
<text x="1670.3" y="41.6" font-size="9" fill="#111">Lhasa</text>
<text x="1537.9" y="94.6" font-size="10.3" fill="#111">Kathmandu</text>
<text x="1637.2" y="101.4" font-size="10" fill="#111">Thimphu</text>
<text x="1438.2" y="113.4" font-size="9" fill="#111">Lucknow</text>
<text x="1459" y="148.9" font-size="9" fill="#111">Allahabad</text>
<text x="1534" y="144" font-size="9" fill="#111">Patna</text>
<text x="1576.3" y="154.3" font-size="9" fill="#111">Bhagalpur</text>
<text x="1685.4" y="131.8" font-size="9" fill="#111">Dispur</text>
<text x="1653.9" y="194" font-size="10" fill="#111">Dhaka</text>
<text x="1606.3" y="222.4" font-size="9" fill="#111">Kolkata</text>
<text x="1685.1" y="226.8" font-size="9" fill="#111">Chittagong</text>
<text x="1563.4" y="190.7" font-size="9" fill="#111">Dhanbad</text>
<text x="1557.8" y="216.5" font-size="9" fill="#111">Jamshedpur</text>
<text x="1450.4" y="253.1" font-size="9" fill="#111">Bhilai</text>
<text x="1551" y="271.2" font-size="9" fill="#111">Cuttack</text>
<text x="1492.3" y="337.6" font-size="9" fill="#111">Vishakhapatnam</text>
<text x="1853.1" y="157.6" font-size="9" fill="#111">Baoshan</text>
<text x="1793.1" y="251.5" font-size="11" font-style="italic" fill="#555">Burma</text>
<text x="1710.2" y="280" font-size="9" fill="#111">Sittwe</text>
<text x="1784" y="288.1" font-size="9" fill="#111">Naypyidaw</text>
<text x="1849.4" y="312.8" font-size="9" fill="#111">Chiang Mai</text>
<text x="1924.5" y="86.9" font-size="9" fill="#111">Xichang</text>
</g>
<circle cx="462" cy="0.3" r="12.6" fill="#6c7060" opacity="0.35"/><circle cx="462" cy="-0.5" r="11.3" fill="url(#gb)" stroke="#fff" stroke-width="2"/><path d="M456.5,-1.5 L462,4 L467.5,-1.5 L462,-5.5 Z" fill="#fff"/>
<circle cx="462" cy="32.5" r="12.6" fill="#6c7060" opacity="0.35"/><circle cx="462" cy="31.7" r="11.3" fill="url(#gb)" stroke="#fff" stroke-width="2"/><rect x="455.8" y="30" width="13.3" height="3.4" fill="#fff"/><rect x="460.6" y="25.1" width="3.4" height="13.2" fill="#fff"/>
<rect x="457" y="46.6" width="10" height="174" rx="5" fill="#333" fill-opacity="0.55"/>
<circle cx="462" cy="193.3" r="11.6" fill="#6c7060" opacity="0.3"/>
<circle cx="462" cy="192.5" r="11" fill="url(#gh)" stroke="#e8e8e8" stroke-width="0.8"/>
<circle cx="462" cy="233.8" r="12.6" fill="#6c7060" opacity="0.35"/><circle cx="462" cy="233" r="11.3" fill="url(#gb)" stroke="#fff" stroke-width="2"/><rect x="455.8" y="231.3" width="13.3" height="3.4" fill="#fff"/>
<g fill="#000"><rect x="429" y="298" width="2" height="37.5"/><rect x="429" y="322" width="70" height="2"/><rect x="472" y="298" width="2" height="26"/><rect x="497" y="322" width="2" height="13.5"/></g>
<g font-family="Liberation Sans, sans-serif" font-weight="bold" text-anchor="middle" fill="#000" stroke="#fff" stroke-width="1.6" paint-order="stroke"><text x="451.5" y="308.3" font-size="10.5" letter-spacing="0.4">200</text><text x="451.5" y="319.8" font-size="10.5" letter-spacing="0.3">km</text><text x="464" y="333.8" font-size="10.5" letter-spacing="0.6">200 mi</text></g>
<text x="1733.4" y="336.8" font-family="Liberation Sans, sans-serif" font-weight="bold" font-size="10.3" letter-spacing="0.95" fill="#000" stroke="#fff" stroke-width="1.5" paint-order="stroke">N 16° 47.3027' : E 079° 39.4351</text>
<text x="1911.3" y="332" font-family="Liberation Sans, sans-serif" font-size="9" fill="#000">V</text>
</svg></div>
<div class="abs" style="left:418px;top:352px;width:1px;height:452px;background:#9c9c9c"></div>
<div class="abs" style="left:419px;top:354px;width:1498px;height:1px;background:#a3a3a3"></div>
<div class="abs" style="left:419px;top:355px;width:1498px;height:30px;background:#ebebeb"></div>
<div class="abs" style="left:419px;top:385px;width:1498px;height:1px;background:#c9c9c9"></div>
<div class="abs" style="left:606px;top:355px;width:1px;height:30px;background:#cdcdcd"></div>
<div class="abs" style="left:747px;top:355px;width:1px;height:30px;background:#cdcdcd"></div>
<div class="abs" style="left:823px;top:355px;width:1px;height:30px;background:#cdcdcd"></div>
<div class="abs" style="left:1639px;top:355px;width:1px;height:30px;background:#cdcdcd"></div>
<div class="abs" style="left:1683px;top:355px;width:1px;height:30px;background:#cdcdcd"></div>
<div class="abs" style="left:1752px;top:355px;width:1px;height:30px;background:#cdcdcd"></div>
<div class="abs" style="left:1796px;top:355px;width:1px;height:30px;background:#cdcdcd"></div>
<div class="abs" style="left:1840px;top:355px;width:1px;height:30px;background:#cdcdcd"></div>
<svg class="abs" style="left:430.5px;top:365px" width="11" height="10"><path d="M5,0.8 L1.2,4.6 L5,8.4 M9.5,0.8 L5.7,4.6 L9.5,8.4" fill="none" stroke="#3d7ab5" stroke-width="1.6"/></svg>
<svg class="abs" style="left:462.5px;top:365px" width="11" height="10"><path d="M5,0.8 L1.2,4.6 L5,8.4" fill="none" stroke="#3d7ab5" stroke-width="1.6"/></svg>
<svg class="abs" style="left:557.5px;top:365px" width="11" height="10"><path d="M1,0.8 L4.8,4.6 L1,8.4" fill="none" stroke="#3d7ab5" stroke-width="1.6"/></svg>
<svg class="abs" style="left:585px;top:365px" width="11" height="10"><path d="M1,0.8 L4.8,4.6 L1,8.4 M5.5,0.8 L9.3,4.6 L5.5,8.4" fill="none" stroke="#3d7ab5" stroke-width="1.6"/></svg>
<div class="abs" style="left:484px;top:359px;width:31px;height:22px;background:#fff;border:1px solid #a9a9a9;text-align:center;line-height:20px;color:#333">1</div>
<div class="abs tt" style="left:518px;top:363px">из 1</div>
<div class="abs tt" style="left:621px;top:363px">Строки с 1 по 2 из 2</div>
<div class="abs" style="left:762px;top:359px;width:46px;height:22px;background:#fff;border:1px solid #a9a9a9;padding-left:5px;line-height:20px;color:#333">50<span style="position:absolute;left:31px;top:8px;width:0;height:0;border-left:5px solid transparent;border-right:5px solid transparent;border-top:5px solid #111"></span></div>
<div class="abs" style="left:1848px;top:359px;width:63px;height:22px;background:#fff;border:1px solid #bdbdbd;border-radius:3px;text-align:center;line-height:20px;color:#24609c">Очистить</div>
<svg class="abs" style="left:1652px;top:361px" width="19" height="14" viewBox="0 0 19 14">
<path d="M1.5,2 Q1.5,1 2.5,1 L8,1 Q9.5,1 9.5,2.5 Q9.5,1 11,1 L16.5,1 Q17.5,1 17.5,2 L17.5,12.5 L1.5,12.5 Z" fill="#dcebf7" stroke="#3a3a3a" stroke-width="1.3"/>
<line x1="9.5" y1="2" x2="9.5" y2="12" stroke="#3a6f9e" stroke-width="1"/>
<path d="M3,4.5 H8 M3,6.5 H8 M3,8.5 H6" stroke="#1f5f95" stroke-width="1.1"/>
<path d="M2.5,11 H16.5" stroke="#9cc6e6" stroke-width="1"/></svg>
<svg class="abs" style="left:1698px;top:360px" width="14" height="16" viewBox="0 0 14 16">
<path d="M1.5,1.5 L8.5,1.5 L12.5,5.5 L12.5,14.5 L1.5,14.5 Z" fill="#e2f1fb" stroke="#4a4a4a" stroke-width="1.2" stroke-linejoin="round"/>
<path d="M8.5,1.5 L8.5,5.5 L12.5,5.5" fill="#fff" stroke="#4a4a4a" stroke-width="1"/>
<path d="M3,11.5 L6.5,6 L6,4 M6.5,6 L10.5,8.5 M6.5,6 L5,9" fill="none" stroke="#e8493c" stroke-width="1.2"/></svg>
<svg class="abs" style="left:1727px;top:360px" width="14" height="16" viewBox="0 0 14 16">
<path d="M1.5,1.5 L8.5,1.5 L12.5,5.5 L12.5,14.5 L1.5,14.5 Z" fill="#e2f1fb" stroke="#4a4a4a" stroke-width="1.2" stroke-linejoin="round"/>
<path d="M8.5,1.5 L8.5,5.5 L12.5,5.5" fill="#fff" stroke="#4a4a4a" stroke-width="1"/>
<path d="M4,6.5 L9.5,12 M9.5,6 L4,12" stroke="#3d8a55" stroke-width="1.5"/></svg>
<svg class="abs" style="left:1767px;top:358px" width="18" height="19" viewBox="0 0 18 19">
<path d="M1.5,4.5 L7,4.5 L12,9.5 L12,17.5 L1.5,17.5 Z" fill="#cde9fb" stroke="#3a3a3a" stroke-width="1.2" stroke-linejoin="round"/>
<path d="M2.5,6.5 H7 M2.5,8.5 H10.5 M2.5,10.5 H10.5 M2.5,12.5 H10.5 M2.5,14.5 H10.5" stroke="#3a8fd4" stroke-width="1"/>
<path d="M6.5,5.5 L11,1 L11,3.5 L16.5,3.5 L16.5,7.5 L11,7.5 L11,10 Z" fill="#f4f4f4" stroke="#3a3a3a" stroke-width="1.1" stroke-linejoin="round"/></svg>
<svg class="abs" style="left:1809px;top:360px" width="18" height="17" viewBox="0 0 18 17">
<path d="M4.5,7 L4.5,1.5 L11,1.5 L13.5,4 L13.5,7" fill="#bfe3fa" stroke="#3a3a3a" stroke-width="1.2"/>
<path d="M3,6.5 L15,6.5 Q16.5,6.5 16.5,8 L16.5,12.5 L1.5,12.5 L1.5,8 Q1.5,6.5 3,6.5 Z" fill="#a9d8f5" stroke="#3a3a3a" stroke-width="1.2"/>
<rect x="4.5" y="6.5" width="9" height="3.5" fill="#1f6fb0"/>
<path d="M4.5,11 L13.5,11 L13.5,15.5 L4.5,15.5 Z" fill="#fff" stroke="#3a3a3a" stroke-width="1.2"/></svg>
<div class="abs" style="left:419px;top:414px;width:1498px;height:1px;background:#d9d9d9"></div>
<div class="cl" style="left:419px;top:415px;width:21px;height:26px;padding-top:2px;background:#f4f4f4;"><span style="position:absolute;right:8px;top:2px;color:#111;font-weight:bold;"></span></div>
<div class="vl" style="left:440px;top:415px;height:26px"></div>
<div class="cl" style="left:441px;top:415px;width:61px;height:26px;padding-top:2px;background:#f4f4f4;padding-left:6px;color:#111;font-weight:bold;">Пробег</div>
<div class="vl" style="left:502px;top:415px;height:26px"></div>
<div class="cl" style="left:503px;top:415px;width:122px;height:26px;padding-top:2px;background:#f4f4f4;padding-left:6px;color:#111;font-weight:bold;">Начальный пробег</div>
<div class="vl" style="left:625px;top:415px;height:26px"></div>
<div class="cl" style="left:626px;top:415px;width:113px;height:26px;padding-top:2px;background:#f4f4f4;padding-left:6px;color:#111;font-weight:bold;">Конечный пробег</div>
<div class="vl" style="left:739px;top:415px;height:26px"></div>
<div class="cl" style="left:740px;top:415px;width:247px;height:26px;padding-top:2px;background:#f4f4f4;padding-left:6px;color:#111;font-weight:bold;">Счетчик (относительный одометр КАН)</div>
<div class="vl" style="left:987px;top:415px;height:26px"></div>
<div class="cl" style="left:988px;top:415px;width:245px;height:26px;padding-top:2px;background:#f4f4f4;padding-left:6px;color:#111;font-weight:bold;">Счетчик (относительный одометр GPS)</div>
<div class="vl" style="left:1233px;top:415px;height:26px"></div>
<div class="cl" style="left:1234px;top:415px;width:128px;height:26px;padding-top:2px;background:#f4f4f4;padding-left:6px;color:#111;font-weight:bold;">Потрачено по ДАРТ</div>
<div class="vl" style="left:1362px;top:415px;height:26px"></div>
<div class="cl" style="left:1363px;top:415px;width:129px;height:26px;padding-top:2px;background:#f4f4f4;padding-left:6px;color:#111;font-weight:bold;">Ср. расход по ДАРТ</div>
<div class="vl" style="left:1492px;top:415px;height:26px"></div>
<div class="cl" style="left:1493px;top:415px;width:102px;height:26px;padding-top:2px;background:#f4f4f4;padding-left:6px;color:#111;font-weight:bold;">Макс. скорость</div>
<div class="vl" style="left:1595px;top:415px;height:26px"></div>
<div class="cl" style="left:1596px;top:415px;width:163px;height:26px;padding-top:2px;background:#f4f4f4;padding-left:6px;color:#111;font-weight:bold;">Макс. обороты двигателя</div>
<div class="vl" style="left:1759px;top:415px;height:26px"></div>
<div class="cl" style="left:1760px;top:415px;width:157px;height:26px;padding-top:2px;background:#f4f4f4;padding-left:6px;color:#111;font-weight:bold;">Пробег (скорректированный)</div>
<div class="cl" style="left:419px;top:441px;width:21px;height:25px;padding-top:0px;"><span style="position:absolute;right:8px;top:0px;color:#2d6aa8;">05</span></div>
<div class="vl" style="left:440px;top:442px;height:24px"></div>
<div class="cl" style="left:441px;top:441px;width:61px;height:25px;padding-top:0px;padding-left:6px;color:#333;">69.92 км</div>
<div class="vl" style="left:502px;top:442px;height:24px"></div>
<div class="cl" style="left:503px;top:441px;width:122px;height:25px;padding-top:0px;padding-left:6px;color:#333;">671364.87 км</div>
<div class="vl" style="left:625px;top:442px;height:24px"></div>
<div class="cl" style="left:626px;top:441px;width:113px;height:25px;padding-top:0px;padding-left:6px;color:#333;">671434.79 км</div>
<div class="vl" style="left:739px;top:442px;height:24px"></div>
<div class="cl" style="left:740px;top:441px;width:247px;height:25px;padding-top:0px;padding-left:6px;color:#333;">69.92</div>
<div class="vl" style="left:987px;top:442px;height:24px"></div>
<div class="cl" style="left:988px;top:441px;width:245px;height:25px;padding-top:0px;padding-left:6px;color:#333;">71.58</div>
<div class="vl" style="left:1233px;top:442px;height:24px"></div>
<div class="cl" style="left:1234px;top:441px;width:128px;height:25px;padding-top:0px;padding-left:6px;color:#333;">20.50 л</div>
<div class="vl" style="left:1362px;top:442px;height:24px"></div>
<div class="cl" style="left:1363px;top:441px;width:129px;height:25px;padding-top:0px;padding-left:6px;color:#333;">29.32 л/100 км</div>
<div class="vl" style="left:1492px;top:442px;height:24px"></div>
<div class="cl" style="left:1493px;top:441px;width:102px;height:25px;padding-top:0px;padding-left:6px;color:#2d6aa8;">90 км/ч</div>
<div class="vl" style="left:1595px;top:442px;height:24px"></div>
<div class="cl" style="left:1596px;top:441px;width:163px;height:25px;padding-top:0px;padding-left:6px;color:#333;">1480</div>
<div class="vl" style="left:1759px;top:442px;height:24px"></div>
<div class="cl" style="left:1760px;top:441px;width:157px;height:25px;padding-top:0px;padding-left:6px;color:#333;">70.15 км</div>
<div class="cl" style="left:419px;top:466px;width:21px;height:25px;padding-top:0px;"><span style="position:absolute;right:8px;top:0px;color:#2d6aa8;">25</span></div>
<div class="vl" style="left:440px;top:467px;height:24px"></div>
<div class="cl" style="left:441px;top:466px;width:61px;height:25px;padding-top:0px;padding-left:6px;color:#333;">1.11 км</div>
<div class="vl" style="left:502px;top:467px;height:24px"></div>
<div class="cl" style="left:503px;top:466px;width:122px;height:25px;padding-top:0px;padding-left:6px;color:#333;">671434.80 км</div>
<div class="vl" style="left:625px;top:467px;height:24px"></div>
<div class="cl" style="left:626px;top:466px;width:113px;height:25px;padding-top:0px;padding-left:6px;color:#333;">671435.91 км</div>
<div class="vl" style="left:739px;top:467px;height:24px"></div>
<div class="cl" style="left:740px;top:466px;width:247px;height:25px;padding-top:0px;padding-left:6px;color:#333;">1.11</div>
<div class="vl" style="left:987px;top:467px;height:24px"></div>
<div class="cl" style="left:988px;top:466px;width:245px;height:25px;padding-top:0px;padding-left:6px;color:#333;">1.17</div>
<div class="vl" style="left:1233px;top:467px;height:24px"></div>
<div class="cl" style="left:1234px;top:466px;width:128px;height:25px;padding-top:0px;padding-left:6px;color:#333;">0.50 л</div>
<div class="vl" style="left:1362px;top:467px;height:24px"></div>
<div class="cl" style="left:1363px;top:466px;width:129px;height:25px;padding-top:0px;padding-left:6px;color:#333;">45.05 л/100 км</div>
<div class="vl" style="left:1492px;top:467px;height:24px"></div>
<div class="cl" style="left:1493px;top:466px;width:102px;height:25px;padding-top:0px;padding-left:6px;color:#2d6aa8;">18 км/ч</div>
<div class="vl" style="left:1595px;top:467px;height:24px"></div>
<div class="cl" style="left:1596px;top:466px;width:163px;height:25px;padding-top:0px;padding-left:6px;color:#333;">906</div>
<div class="vl" style="left:1759px;top:467px;height:24px"></div>
<div class="cl" style="left:1760px;top:466px;width:157px;height:25px;padding-top:0px;padding-left:6px;color:#333;">1.11 км</div>
<div class="abs" style="left:419px;top:465px;width:1498px;height:1px;background:#d4d4d4"></div>
<div class="abs" style="left:419px;top:490px;width:1498px;height:1px;background:#d4d4d4"></div>
<div class="abs" style="left:419px;top:766px;width:1498px;height:1px;background:#d4d4d4"></div>
<div class="abs" style="left:419px;top:767px;width:1498px;height:27px;background:#f4f4f4"></div>
<div class="cl" style="left:419px;top:767px;width:21px;height:27px;padding-top:2px;"><span style="position:absolute;right:6px;top:2px;color:#111;font-weight:bold;">:25</span></div>
<div class="vl" style="left:440px;top:768px;height:26px"></div>
<div class="cl" style="left:441px;top:767px;width:61px;height:27px;padding-top:2px;padding-left:6px;color:#111;font-weight:bold;">71.03 км</div>
<div class="vl" style="left:502px;top:768px;height:26px"></div>
<div class="cl" style="left:503px;top:767px;width:122px;height:27px;padding-top:2px;padding-left:6px;color:#111;font-weight:bold;">671364.87 км</div>
<div class="vl" style="left:625px;top:768px;height:26px"></div>
<div class="cl" style="left:626px;top:767px;width:113px;height:27px;padding-top:2px;padding-left:6px;color:#111;font-weight:bold;">671435.91 км</div>
<div class="vl" style="left:739px;top:768px;height:26px"></div>
<div class="cl" style="left:740px;top:767px;width:247px;height:27px;padding-top:2px;padding-left:6px;color:#111;font-weight:bold;">71.03</div>
<div class="vl" style="left:987px;top:768px;height:26px"></div>
<div class="cl" style="left:988px;top:767px;width:245px;height:27px;padding-top:2px;padding-left:6px;color:#111;font-weight:bold;">72.75</div>
<div class="vl" style="left:1233px;top:768px;height:26px"></div>
<div class="cl" style="left:1234px;top:767px;width:128px;height:27px;padding-top:2px;padding-left:6px;color:#111;font-weight:bold;">21.00 л</div>
<div class="vl" style="left:1362px;top:768px;height:26px"></div>
<div class="cl" style="left:1363px;top:767px;width:129px;height:27px;padding-top:2px;padding-left:6px;color:#111;font-weight:bold;">29.57 л/100 км</div>
<div class="vl" style="left:1492px;top:768px;height:26px"></div>
<div class="cl" style="left:1493px;top:767px;width:102px;height:27px;padding-top:2px;padding-left:6px;color:#111;font-weight:bold;">90 км/ч</div>
<div class="vl" style="left:1595px;top:768px;height:26px"></div>
<div class="cl" style="left:1596px;top:767px;width:163px;height:27px;padding-top:2px;padding-left:6px;color:#111;font-weight:bold;">1480</div>
<div class="vl" style="left:1759px;top:768px;height:26px"></div>
<div class="cl" style="left:1760px;top:767px;width:157px;height:27px;padding-top:2px;padding-left:6px;color:#111;font-weight:bold;">71.26 км</div>
<div class="abs" style="left:419px;top:794px;width:1498px;height:10px;background:#f1f1f1"></div>
<div class="abs" style="left:753px;top:795px;width:1127px;height:9px;background:#bcbcbc"></div>
<div class="abs" style="left:424px;top:797px;width:0;height:0;border-top:4px solid transparent;border-bottom:4px solid transparent;border-right:4px solid #505050"></div>
<div class="abs" style="left:1907px;top:797px;width:0;height:0;border-top:4px solid transparent;border-bottom:4px solid transparent;border-left:4px solid #505050"></div>
</body></html>
